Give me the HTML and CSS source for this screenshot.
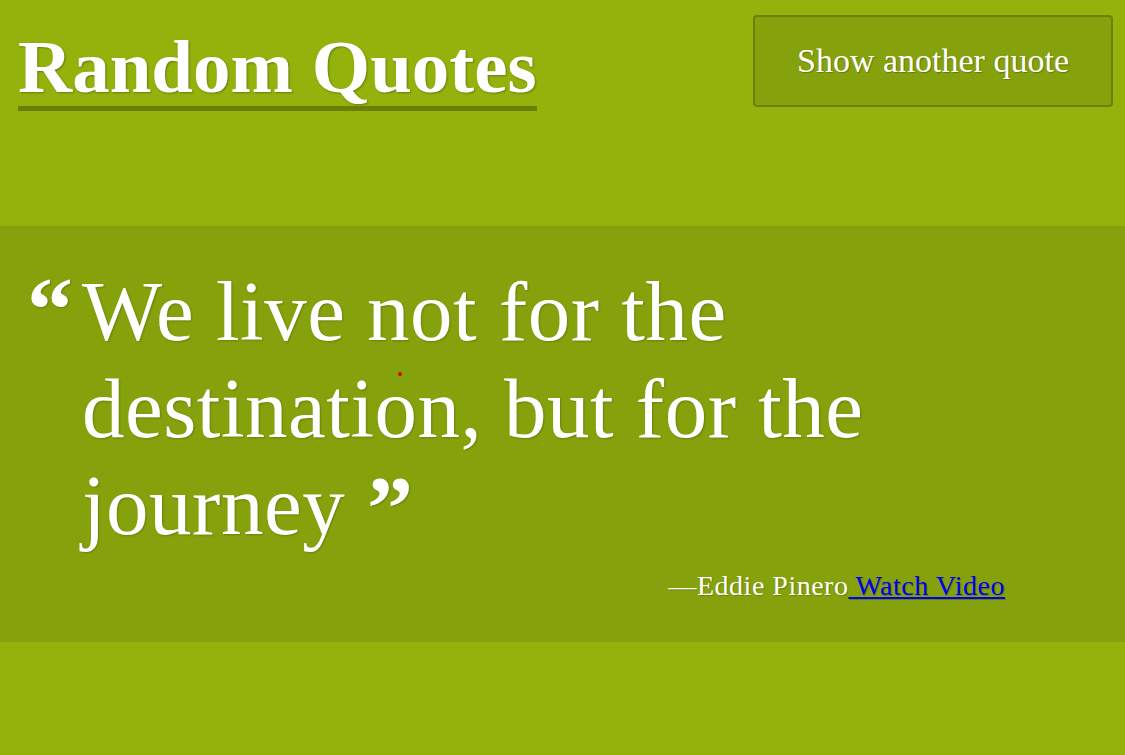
FILE: index.html
```html
<!DOCTYPE html>
<html lang="en">
<head>
<meta charset="utf-8">
<title>Random Quotes</title>
<link rel="stylesheet" href="styles.css">
</head>
<body>
<header class="top">
  <h1 class="title">Random Quotes</h1>
  <button class="next-btn" type="button">Show another quote</button>
</header>
<section class="band">
  <div class="open-mark">&ldquo;</div>
  <div class="quote-col">
    <p class="quote-text">We live not for the destination, but for the journey <span class="close-mark">&rdquo;</span></p>
    <div class="attribution">&mdash;Eddie Pinero<a href="#" class="video-link"> Watch Video</a></div>
  </div>
</section>
<span class="cursor-dot"></span>
</body>
</html>
```
FILE: styles.css
```css
html, body {
  margin: 0;
  padding: 0;
}
body {
  background: #93b20b;
  font-family: "Liberation Serif", "Times New Roman", serif;
  color: #ffffff;
  min-height: 755px;
  position: relative;
}
.top {
  display: flex;
  justify-content: space-between;
  align-items: flex-start;
  padding: 0 12px 0 18px;
}
.title {
  margin: 29px 0 0 0;
  font-size: 75px;
  line-height: 75px;
  font-weight: 700;
  padding-bottom: 2px;
  border-bottom: 5px solid #6b7f05;
  text-shadow: 1px 1px 2px rgba(0, 0, 0, 0.3);
}
.next-btn {
  margin-top: 15px;
  width: 360px;
  height: 92px;
  background: #85a10b;
  border: 2px solid #6b8005;
  border-radius: 4px;
  color: #ffffff;
  font-family: "Liberation Serif", "Times New Roman", serif;
  font-size: 34px;
  padding: 0;
  text-shadow: 1px 1px 1px rgba(0, 0, 0, 0.25);
}
.band {
  margin-top: 115px;
  background: #85a10b;
  display: flex;
  padding: 37px 120px 40px 27px;
}
.open-mark {
  width: 55px;
  flex: 0 0 55px;
  font-size: 92px;
  font-weight: 700;
  line-height: 1;
  height: 60px;
  text-shadow: 1px 1px 2px rgba(0, 0, 0, 0.2);
}
.quote-col {
  flex: 1;
}
.quote-text {
  margin: 0;
  font-size: 85px;
  line-height: 97px;
  letter-spacing: 0.5px;
  text-shadow: 1px 1px 2px rgba(0, 0, 0, 0.2);
}
.close-mark {
  font-size: 92px;
  font-weight: 700;
  vertical-align: -5px;
}
.attribution {
  margin-top: 13px;
  text-align: right;
  font-size: 28px;
  line-height: 32px;
  letter-spacing: 0.5px;
  text-shadow: 1px 1px 1px rgba(0, 0, 0, 0.2);
}
.video-link {
  color: #0000ee;
  text-decoration: underline;
}
.cursor-dot {
  position: absolute;
  left: 398px;
  top: 372px;
  width: 4px;
  height: 4px;
  border-radius: 50%;
  background: #e00000;
}
```
